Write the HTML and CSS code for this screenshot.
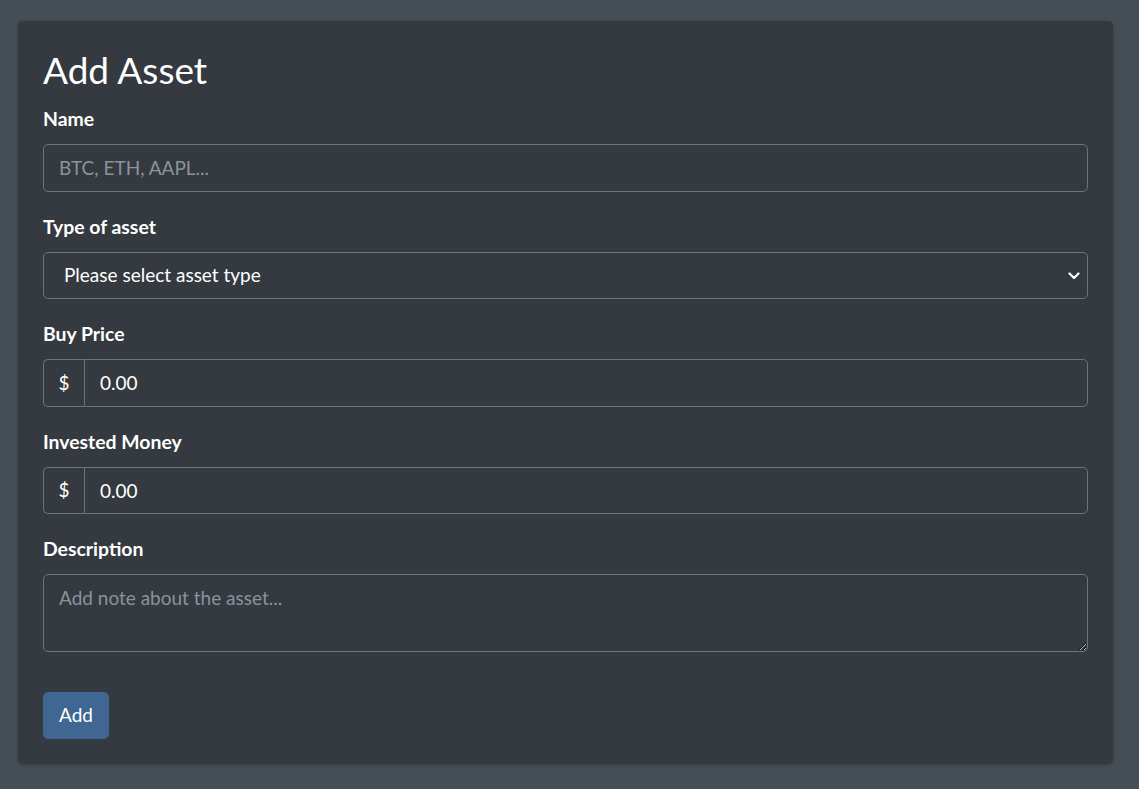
FILE: index.html
```html
<!DOCTYPE html>
<html lang="en">
<head>
<meta charset="utf-8">
<title>Add Asset</title>
<link rel="stylesheet" href="styles.css">
</head>
<body>
<div class="page">
  <div class="card">
    <h2 class="title">Add Asset</h2>
    <form class="form">
      <div class="group">
        <label class="label" for="name">Name</label>
        <input class="control" id="name" type="text" placeholder="BTC, ETH, AAPL...">
      </div>
      <div class="group">
        <label class="label" for="type">Type of asset</label>
        <div class="select-wrap">
          <select class="control select" id="type">
            <option>Please select asset type</option>
          </select>
          <svg class="chevron" width="12" height="8" viewBox="0 0 12 8"><path d="M1.5 1.5 L6 6 L10.5 1.5" fill="none" stroke="#fff" stroke-width="2.2" stroke-linecap="round" stroke-linejoin="round"/></svg>
        </div>
      </div>
      <div class="group">
        <label class="label" for="buy">Buy Price</label>
        <div class="input-group">
          <span class="addon">$</span>
          <input class="control joined" id="buy" type="text" value="0.00">
        </div>
      </div>
      <div class="group">
        <label class="label" for="invested">Invested Money</label>
        <div class="input-group">
          <span class="addon">$</span>
          <input class="control joined" id="invested" type="text" value="0.00">
        </div>
      </div>
      <div class="group">
        <label class="label" for="desc">Description</label>
        <textarea class="control area" id="desc" rows="2" placeholder="Add note about the asset..."></textarea>
      </div>
      <div class="actions">
        <button class="btn" type="button">Add</button>
      </div>
    </form>
  </div>
</div>
</body>
</html>
```

FILE: styles.css
```css
* { box-sizing: border-box; }
html, body {
  margin: 0;
  padding: 0;
  background: #454d55;
  color: #fff;
  font-family: Lato, "Noto Sans", "Liberation Sans", sans-serif;
  font-size: 19px;
  line-height: 1.5;
}
.page {
  padding: 21px 26px 25px 18px;
}
.card {
  background: #343a40;
  border-radius: 5px;
  box-shadow: 0 0 1px rgba(0,0,0,.125), 0 1px 3px rgba(0,0,0,.2);
  padding: 25px;
}
.title {
  margin: 0 0 10px;
  font-size: 37px;
  line-height: 48px;
  font-weight: 400;
}
.form { margin: 0; }
.group { margin-bottom: 20px; }
.label {
  display: block;
  font-weight: 700;
  font-size: 19.4px;
  margin-bottom: 10px;
  line-height: 30px;
}
.control {
  display: block;
  width: 100%;
  height: 47.5px;
  padding: 7.5px 15px;
  font-family: inherit;
  font-size: 19px;
  line-height: 30px;
  color: #fff;
  background: #343a40;
  border: 1px solid #6c757d;
  border-radius: 5px;
  outline: none;
}
.control::placeholder { color: #8b939b; opacity: 1; }
.select-wrap { position: relative; }
.select {
  appearance: none;
  -webkit-appearance: none;
  padding-left: 20px;
}
.chevron {
  position: absolute;
  right: 8px;
  top: 20px;
}
.input-group { display: flex; }
.addon {
  display: flex;
  align-items: center;
  justify-content: center;
  width: 41px;
  height: 47.5px;
  border: 1px solid #6c757d;
  border-right: none;
  border-radius: 5px 0 0 5px;
  background: #343a40;
}
.joined {
  flex: 1;
  border-radius: 0 5px 5px 0;
}
.area {
  height: 77.5px;
  resize: vertical;
}
.actions { padding-top: 20px; }
.btn {
  font-family: inherit;
  font-size: 19px;
  line-height: 30px;
  color: #fff;
  background: #3f6791;
  border: 1px solid #3f6791;
  border-radius: 5px;
  padding: 7.5px 15px;
  height: 47.5px;
  cursor: pointer;
}
```
